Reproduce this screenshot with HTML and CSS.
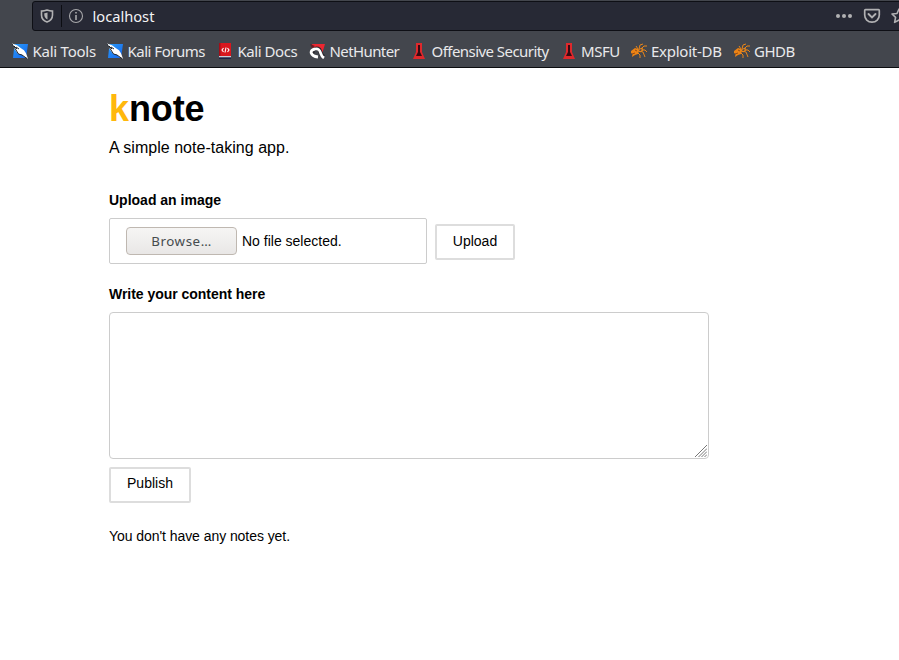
FILE: index.html
```html
<!DOCTYPE html>
<html lang="en">
<head>
<meta charset="utf-8">
<title>knote</title>
<link rel="stylesheet" href="styles.css">
</head>
<body>
<svg width="0" height="0" class="defs">
  <defs>
    <linearGradient id="blue" x1="0" y1="0" x2="1" y2="1"><stop offset="0" stop-color="#2b9bf5"/><stop offset="1" stop-color="#1465ef"/></linearGradient>
    <symbol id="kali" viewBox="0 0 16 16"><path d="M2.500 1H16l-2 14H1z" fill="url(#blue)"/><path d="M0 .5l5 1.700 4 3 3 2 2 3 2 5.500-4-2-2-2-4-1-3-4z" fill="#fff"/><path d="M0 1l4 6 2.500 4 3.500 1 5 3.500M2 3l3 3M4 4l3 2" fill="none" stroke="#20262e" stroke-width="1"/></symbol>
    <symbol id="docs" viewBox="0 0 16 16"><path d="M2 0h12v13H2z" fill="#d9171e"/><path d="M2 0h1.500v14H2z" fill="#a50e18"/><path d="M2 13h12v1.500H2z" fill="#c9cad8"/><path d="M2 14.500h12V16H2z" fill="#1d2447"/><path d="M6.500 5L5 7l1.500 2M10.500 5L12 7l-1.500 2M9 4.500L8 9.500" fill="none" stroke="#fff" stroke-width="1.100"/></symbol>
    <symbol id="hunter" viewBox="0 0 16 16"><path d="M3 1h13l-3 10-3-5-6 1z" fill="#ed2630"/><path d="M1 1l5 2-3 2z" fill="#681b24"/><path d="M4 11c-3-5 6-8 7-3 .5 2.500 1 4.500 4 6" fill="none" stroke="#252429" stroke-width="4"/><path d="M9 14c-8-1-9-7-3-8 5-1 5 3 6 5 .5 2 1.500 3 3 4" fill="none" stroke="#fff" stroke-width="2.800"/></symbol>
    <symbol id="offsec" viewBox="0 0 16 16"><path d="M5 0h6v9l3 7H2l3-7z" fill="#df282b"/><path d="M7 2h2v7l2 4H5l2-4z" fill="#370a12"/></symbol>
    <symbol id="bug" viewBox="0 0 16 16"><path d="M0 8l4-3 3 1 1 2-1 3-3 1-3 2 .5-3L0 10z" fill="#ec8314"/><path d="M7 7l4-2 1 2-3 2zM8 6l1-4 3-1M10 6l3-3 3 0M10 7h4l2 2M8 8l4 1 2 5M6 9l3 3 0 3M7 6L5 3" fill="none" stroke="#e98519" stroke-width="1"/><path d="M1 11l3-1M4 7l2 1" stroke="#934b17"/></symbol>
  </defs>
</svg>
<header class="chrome">
  <div class="urlbar">
    <svg class="shield" width="14" height="14" viewBox="0 0 14 14"><path d="M7 1c-2 .8-4 1.100-5.500 1.100V6c0 3.500 2.500 6 5.500 7 3-1 5.500-3.500 5.500-7V2.100C11 2.100 9 1.800 7 1z" fill="none" stroke="#b1b1b3" stroke-width="1.600"/><path d="M7.500 3.500v7C5.500 9.500 4.300 7.800 4.300 6V4.200c1 0 2-.3 3.200-.7z" fill="#b1b1b3"/></svg>
    <span class="divider"></span>
    <svg class="info" width="16" height="16" viewBox="0 0 16 16"><circle cx="8" cy="8" r="6.500" fill="none" stroke="#a7a7aa" stroke-width="1.100"/><path d="M8 7v5M8 4v1.600" stroke="#b1b1b3" stroke-width="1.500"/></svg>
    <span class="address">localhost</span>
    <div class="actions">
      <svg width="18" height="16" viewBox="0 0 18 16"><g fill="#b1b1b3"><circle cx="3" cy="8" r="2"/><circle cx="9" cy="8" r="2"/><circle cx="15" cy="8" r="2"/></g></svg>
      <svg class="pocket" width="18" height="16" viewBox="0 0 18 16"><path d="M2.500 1.700h13q.8 0 .8.800V7c0 4-3 7.200-7.300 7.200S1.700 11 1.700 7V2.500q0-.8.800-.8z" fill="none" stroke="#b1b1b3" stroke-width="1.700"/><path d="M5.500 6L9 9.500 12.500 6" fill="none" stroke="#b1b1b3" stroke-width="1.900" stroke-linecap="round"/></svg>
      <svg class="star" width="16" height="16" viewBox="0 0 16 16"><path d="M8 1l2 4.500 5 .5-3.700 3.400 1 5L8 12l-4.400 2.400 1-5L1 6l5-.5z" fill="none" stroke="#b1b1b3" stroke-width="1.600" stroke-linejoin="round"/></svg>
    </div>
  </div>
  <nav class="bookmarks">
    <a class="tools"><svg><use href="#kali"/></svg><span>Kali Tools</span></a>
    <a class="forums"><svg><use href="#kali"/></svg><span>Kali Forums</span></a>
    <a class="kdocs"><svg><use href="#docs"/></svg><span>Kali Docs</span></a>
    <a class="nethunter"><svg><use href="#hunter"/></svg><span>NetHunter</span></a>
    <a class="offensive"><svg><use href="#offsec"/></svg><span>Offensive Security</span></a>
    <a class="msfu"><svg><use href="#offsec"/></svg><span>MSFU</span></a>
    <a class="exploit"><svg><use href="#bug"/></svg><span>Exploit-DB</span></a>
    <a class="ghdb"><svg><use href="#bug"/></svg><span>GHDB</span></a>
  </nav>
</header>
<main class="page">
  <h1><span class="accent">k</span>note</h1>
  <p class="tagline">A simple note-taking app.</p>
  <form>
    <h2>Upload an image</h2>
    <div class="upload-row">
      <div class="file"><button type="button" class="browse">Browse…</button><span>No file selected.</span></div>
      <button type="button" class="btn upload">Upload</button>
    </div>
    <h2 class="write">Write your content here</h2>
    <div class="editor"><svg width="12" height="12" viewBox="0 0 12 12"><path d="M0 12L12 0M3.500 12L12 3.500M6.500 12L12 6.500M9.500 12L12 9.500" stroke="#777" stroke-width="1"/></svg></div>
    <button type="button" class="btn publish">Publish</button>
  </form>
  <p class="empty">You don't have any notes yet.</p>
</main>
</body>
</html>
```
FILE: styles.css
```css
* { box-sizing: border-box; }
body { margin: 0; background: #fff; color: #000; font: 14px/20px "Liberation Sans", Arial, sans-serif; overflow: hidden; }
svg { display: block; flex: none; }
.defs { position: absolute; }
.chrome { height: 68px; background: #43464d; border-bottom: 1px solid #0c0d10; padding-top: 1px; overflow: hidden; font-family: "Noto Sans", sans-serif; }
.urlbar { height: 30px; margin: 0 -10px 0 32px; border: 1px solid #0e0f15; border-radius: 3px; background: #272935; display: flex; align-items: center; padding-left: 7px; }
.divider { width: 1px; height: 22px; background: #0c0d12; margin: 0 6px 0 7px; }
.address { margin-left: 8.500px; color: #f4f4f5; font-size: 14.67px; }
.actions { display: flex; margin-left: auto; margin-right: 1px; }
.pocket { margin-left: 10px; }
.star { margin-left: 10px; }
.bookmarks { display: flex; align-items: center; height: 36px; padding: 4px 0 0 12px; color: #e9e9eb; font-size: 15px; }
.bookmarks a { display: flex; align-items: center; gap: 4.500px; white-space: nowrap; flex: none; }
.bookmarks svg { width: 16px; height: 16px; }
.tools { width: 95px; letter-spacing: -0.25px; }
.forums { width: 110px; letter-spacing: -0.5px; }
.kdocs { width: 92px; letter-spacing: -0.45px; }
.nethunter { width: 102px; letter-spacing: -0.6px; }
.offensive { width: 149.500px; letter-spacing: -0.55px; }
.msfu { width: 70px; letter-spacing: -0.45px; }
.exploit { width: 103px; letter-spacing: -0.25px; }
.ghdb { letter-spacing: -0.5px; }
.page { margin-left: 109px; width: 600px; padding-top: 21px; }
h1 { margin: 0; font-size: 36px; line-height: 40px; letter-spacing: -0.1px; }
.accent { color: #ffb80c; }
.tagline { margin: 9px 0 32px; font-size: 16px; letter-spacing: 0.03px; }
h2 { margin: 0; font-size: 14px; line-height: 20px; }
.upload-row { display: flex; align-items: center; margin-top: 8px; }
.file { width: 318px; height: 46px; border: 1px solid #ccc; border-radius: 2px; padding-left: 16px; display: flex; align-items: center; gap: 5px; }
.browse { width: 111px; height: 28px; border: 1px solid #bfb8b1; border-radius: 4px; background: linear-gradient(#f6f5f4, #e9e7e6); color: #454b4d; font: 13.33px "Noto Sans", sans-serif; letter-spacing: 0.55px; padding: 0; }
.btn { height: 36px; border: 2px solid #ddd; border-radius: 2px; background: #fff; color: #000; font: 14px "Liberation Sans", Arial, sans-serif; padding: 0 0 3px; display: block; }
.upload { width: 80px; margin: 2px 0 0 8px; }
.write { margin-top: 20px; letter-spacing: -0.03px; }
.editor { height: 147px; margin: 8px 0; border: 1px solid #ccc; border-radius: 4px; display: flex; align-items: flex-end; justify-content: flex-end; padding: 0 1px 1px 0; }
.publish { width: 82px; padding-bottom: 5px; }
.empty { margin: 23px 0 0; letter-spacing: -0.06px; }
```
